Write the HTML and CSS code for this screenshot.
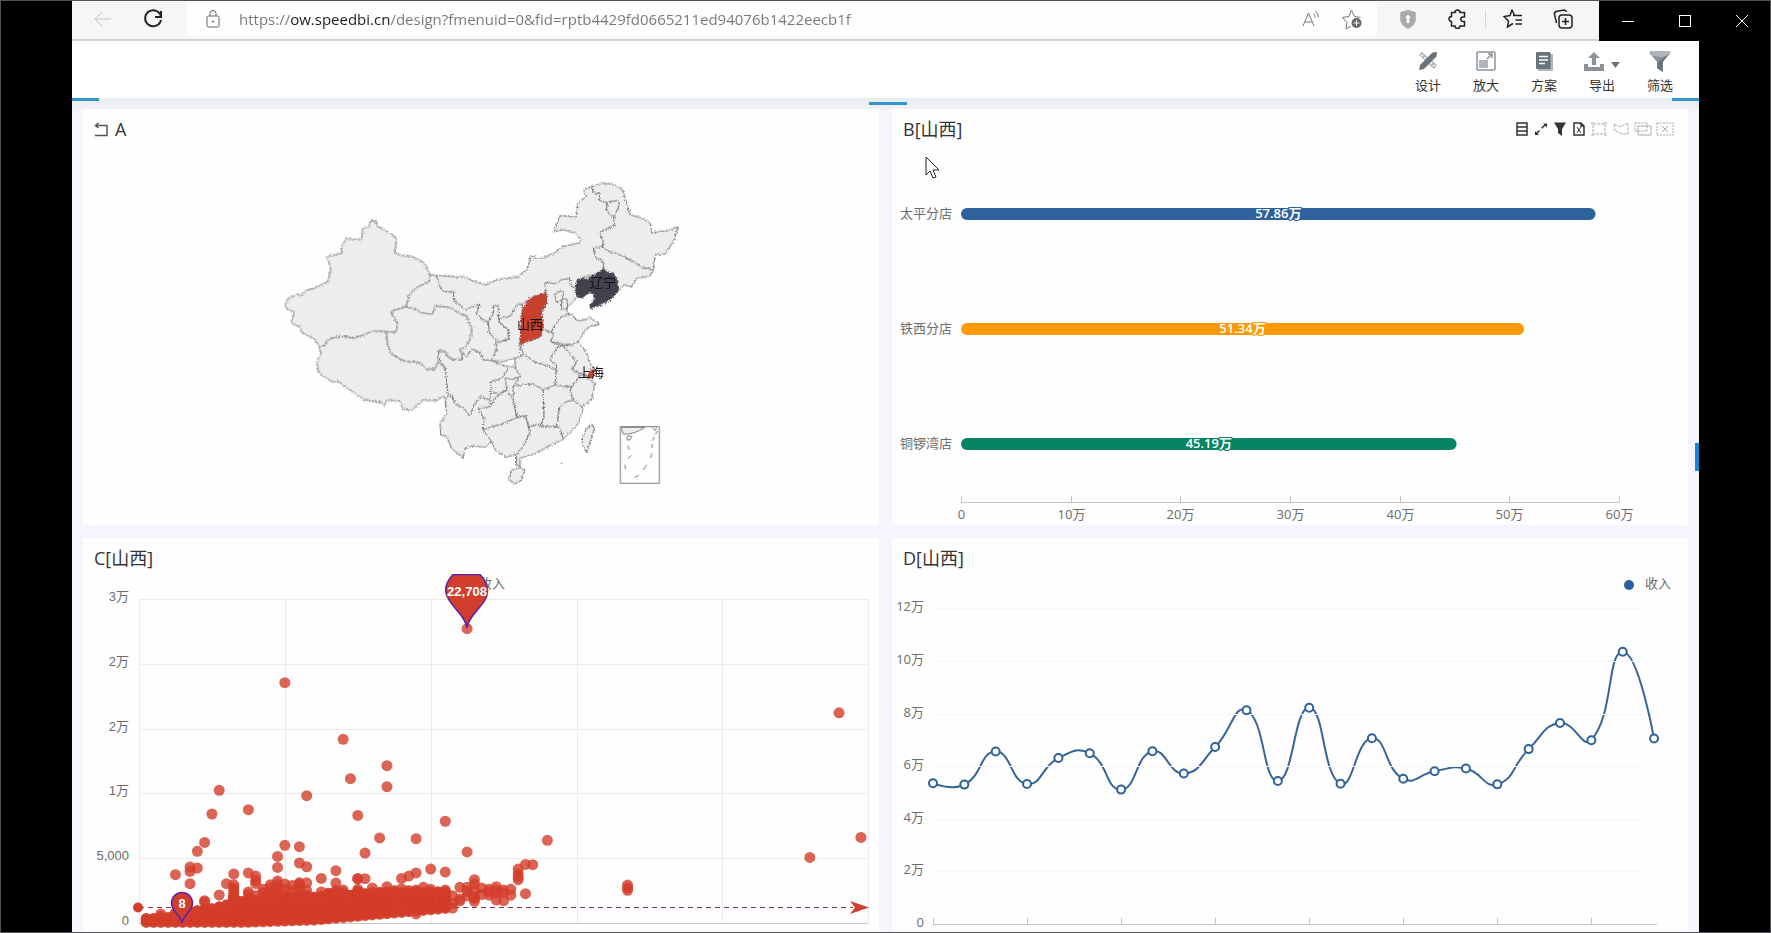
FILE: index.html
```html
<!DOCTYPE html>
<html lang="zh-CN">
<head>
<meta charset="utf-8">
<title>SpeedBI</title>
<link rel="stylesheet" href="styles.css">
</head>
<body>
<header class="titlebar">
  <nav class="browser-nav">
    <button class="chrome-btn faded" aria-label="后退"><svg width="20" height="20" viewBox="0 0 20 20"><path d="M18 10H2M9 3l-7 7 7 7"/></svg></button>
    <button class="chrome-btn" aria-label="刷新"><svg width="20" height="20" viewBox="0 0 20 20"><path class="bold" d="M18 7.500A8 8 0 1 0 18 11M18 2v6h-6"/></svg></button>
  </nav>
  <div class="address">
    <svg class="lock" width="16" height="20" viewBox="0 0 16 20"><rect x="2" y="7" width="12" height="11" rx="1.500"/><path d="M5 7V4.500a3 3 0 0 1 6 0V7"/><circle class="solid" cx="8" cy="12.500" r="1"/></svg>
    <input class="url" type="text" aria-label="地址" value="https://ow.speedbi.cn/design?fmenuid=0&amp;fid=rptb4429fd0665211ed94076b1422eecb1f">
    <button class="chrome-btn small grey" aria-label="朗读"><svg width="20" height="20" viewBox="0 0 20 20"><path d="M2 17L7.500 4 13 17M4 13h7M12.500 4.500a6 6 0 0 1 1.500 4M14.500 2a9 9 0 0 1 3 6.500"/></svg></button>
    <button class="chrome-btn small grey" aria-label="收藏"><svg width="22" height="22" viewBox="0 0 22 22"><path d="M10 18l-5 3 1-6.500L1.500 9.500 8 8.500 10.500 2l3 6.500 6 1"/><circle class="solid" cx="15.500" cy="15" r="5"/><path class="cut" d="M12.500 15h6M15.500 12v6"/></svg></button>
  </div>
  <div class="browser-tools">
    <button class="chrome-btn" aria-label="防护"><svg width="20" height="20" viewBox="0 0 20 20"><path class="shield" d="M10 1l7.500 2.500V10c0 5-4 8-7.500 9.500C6.500 18 2.500 15 2.500 10V3.500z"/><path class="keyhole" d="M8.500 14l.500-4a2 2 0 1 1 2 0l.500 4z"/></svg></button>
    <button class="chrome-btn" aria-label="扩展"><svg width="20" height="20" viewBox="0 0 20 20"><path class="bold" d="M7 3.500a2.500 2.500 0 0 1 5 0h4.500V8H15a2 2 0 0 0 0 4.500h1.500V17H12a2.500 2.500 0 0 1-5 0H3.500v-4.500a2.500 2.500 0 0 1 0-5V3.500z"/></svg></button>
    <span class="divider"></span>
    <button class="chrome-btn" aria-label="收藏夹"><svg width="20" height="20" viewBox="0 0 20 20"><path class="bold" d="M10 6.500h9M12.500 11H19M12.500 15H19M10 14.500L4.500 18l1-6L1 7.500l6-1L9 1l2.500 5.500"/></svg></button>
    <button class="chrome-btn" aria-label="集锦"><svg width="20" height="20" viewBox="0 0 20 20"><rect class="bold" x="6" y="6" width="13" height="13" rx="3"/><path class="bold" d="M12.500 9v7M9 12.500h7M3.500 14L1.500 5.500Q1 3.500 3 2.500L11 1q2 0 2.500 2"/></svg></button>
  </div>
  <div class="window-controls">
    <button aria-label="最小化"><svg width="14" height="14" viewBox="0 0 14 14"><path d="M1 7.500h12"/></svg></button>
    <button aria-label="最大化"><svg width="14" height="14" viewBox="0 0 14 14"><rect x="1.500" y="1.500" width="11" height="11"/></svg></button>
    <button aria-label="关闭"><svg width="14" height="14" viewBox="0 0 14 14"><path d="M1 1l12 12M13 1L1 13"/></svg></button>
  </div>
</header>

<main class="app">
  <div class="app-toolbar">
    <button class="tool"><svg width="20" height="20" viewBox="0 0 20 20"><path class="light" d="M1 4l3-3 15 13-3 4z"/><path class="cutline" d="M5 3.500L3.500 5M8 6L6.500 7.500M14 11.500l-1.500 1.500M16.500 14L15 15.500"/><path class="dark" d="M1 19l1-5L14.500 1.500 19 1l-.500 4.500L6 18z"/></svg><span>设计</span></button>
    <button class="tool"><svg width="20" height="20" viewBox="0 0 20 20"><rect class="outline" x="1" y="1" width="18" height="18" rx="1"/><rect class="light" x="3" y="9" width="9" height="8"/><path class="outline" d="M11 8l5-5M12 3h4v4"/></svg><span>放大</span></button>
    <button class="tool"><svg width="20" height="20" viewBox="0 0 20 20"><rect class="light" x="4" y="3" width="15" height="17" rx="1"/><rect class="dark" x="2" y="1" width="14.500" height="17" rx="1"/><path class="cutline" d="M5 5.500h9M5 9h9M5 12.500h6"/></svg><span>方案</span></button>
    <button class="tool"><span class="tool-icons"><svg width="20" height="20" viewBox="0 0 20 20"><path class="mid" d="M8 14V7H4l6-6 6 6h-4v7z"/><path class="mid" d="M0 13h4v3h12v-3h4v7H0z"/></svg><svg class="caret" width="9" height="6" viewBox="0 0 9 6"><path class="dark" d="M0 0h9L4.500 6z"/></svg></span><span>导出</span></button>
    <button class="tool"><svg width="24" height="24" viewBox="0 0 24 24"><path class="mid" d="M1 1h22v3l-8 9v11l-6-4v-7L1 4z"/><path class="light" d="M1 1h22v3l-9 4L3 6z"/><path class="dark" d="M20 6l-5 7v11l-6-4v-6z"/></svg><span>筛选</span></button>
  </div>

  <div class="board">
    <span class="handle handle-left"></span>
    <span class="handle handle-mid"></span>
    <span class="handle handle-right"></span>
    <span class="handle handle-side"></span>

    <section class="panel">
      <header class="panel-head">
        <button class="back" aria-label="返回"><svg width="15" height="15" viewBox="0 0 15 15"><path d="M1 3.500h12v10H1M4.500 1L1.500 3.500l3 2.500"/></svg></button>
        <h2>A</h2>
      </header>
      <svg class="chart" viewBox="0 0 796 380" role="img" aria-label="地图">
        <defs>
          <filter id="coast" x="-5%" y="-5%" width="110%" height="110%">
            <feTurbulence type="fractalNoise" baseFrequency="0.200" numOctaves="2" seed="4"/>
            <feDisplacementMap in="SourceGraphic" scale="12" xChannelSelector="R" yChannelSelector="G"/>
          </filter>
        </defs>
        <g class="map" transform="translate(337 25) scale(.3333)">
          <g filter="url(#coast)">
            <path class="land" d="M200 590L420 590 430 700 410 775 325 780 200 775Z"/>
            <g transform="translate(-450 0)">
              <path d="M300 153H318L322 168 345 182 368 192 380 210 374 248 392 256 425 259 462 278 481 314 478 335 440 352 418 375 408 410 362 425 383 460 378 487 350 485 310 482 285 493 250 505 215 498 175 508 163 527 148 528 130 505 95 488 88 470 65 460 72 425 52 418 45 405 55 385 85 371 90 378 110 360 130 356 173 335 183 295 170 260 215 250V232L228 203 245 208H275L278 175 297 170Z"/>
              <path d="M148 528L153 550 140 578 148 610 190 638 200 632 240 660 285 690 335 697 342 710 350 690 390 693 400 720H425L460 690 500 692 518 680 535 688 533 640 530 605 510 578 500 582 495 597 470 598 450 578 400 572 362 550 352 520 350 485 310 482 285 493 250 505 215 498 175 508 163 527Z"/>
              <path d="M362 425L408 410 445 420 450 428 487 432 495 408 540 412 560 425 590 440 607 480 597 515 585 535H570L578 550 572 575 545 568 525 545 510 538 503 545 505 575 495 597 470 598 450 578 400 572 362 550 352 520 350 485 378 487 383 460Z"/>
              <path d="M408 410L418 375 440 352 478 335 481 314 500 316 510 350 522 365H552L550 390 585 418 600 405 630 402 620 430 640 452 655 455 658 490 678 508V540L665 572 640 570 630 548 608 538 590 560 572 548 570 535H585L597 515 607 480 590 440 560 425 540 412 495 408 487 432 450 428 445 420Z"/>
            </g>
            <path d="M50 316L100 320 135 322 165 335 195 345 235 328 295 320 325 295 328 262 340 258 352 265 375 262 410 245 420 232 478 218 483 208 465 188 430 180 402 185 420 138 470 140 472 105 498 78 490 60 515 50 520 68 538 70 540 92 562 97 560 120 582 140 585 165 540 188 550 215 548 230 520 235 528 265 548 270 552 298 530 315 500 318 472 330 470 355 455 350 448 325 425 330 410 340 375 338 378 370 345 378 325 390 308 402 290 405 270 440 235 445V408L222 405 220 430 205 455 190 450 170 430 180 402 135 418 100 390 102 365H72L60 350Z"/>
            <path d="M515 50L545 40 580 42 608 60 632 135 660 142 690 158 695 188 750 180 775 170 760 215 735 252 705 255 700 298 665 292 640 275 615 262 590 250 565 245 548 230 550 215 540 188 585 165 582 140 600 100 590 92 562 97 540 92 538 70 520 68Z"/>
            <path d="M548 230L565 245 590 250 615 262 640 275 665 292 700 298 690 318 650 325 635 350 612 345 596 362 590 325 570 310 552 298 548 270 528 265 520 235ZM562 97L560 120 570 135 582 140 600 100 590 92Z"/>
            <path d="M375 338L410 340 425 330 448 325 455 350 470 355V378L462 392 440 412V428L455 432 425 440 405 465 395 485 370 480 362 480 365 430 380 398 378 370ZM403 372L420 362 432 368 425 390 410 398ZM425 390L440 385 444 415 425 418Z"/>
            <path d="M425 440L455 432 470 452 500 448 510 440 518 450 536 458V465L510 468 490 488 475 515 455 525 420 520 390 515 400 498 395 485 405 465Z"/>
            <path d="M308 402L303 470 300 525 303 560 285 565 250 575 215 572 230 540V518L265 510 268 480 240 460 235 445 270 440 290 405Z"/>
            <path d="M235 445V408L222 405 220 430 205 455 208 488 225 505 240 515 265 505V480L240 460Z"/>
            <path d="M300 525L325 513 362 500V480L370 480 395 487 400 498 390 515 418 525 405 545 390 570 410 585 408 600 390 590 340 575 310 550Z"/>
            <path d="M418 525L455 525 475 515 495 540 510 580 525 600 505 618 480 610 455 600 470 575 450 550 432 530Z"/>
            <path d="M418 525L432 530 450 550 470 575 455 600 480 610 475 625 455 650H430L405 645 408 600 410 585 390 570 405 545Z"/>
            <path d="M475 625L480 610 505 625 525 640 515 690 485 710 460 690 450 665 455 650Z"/>
            <path d="M285 565L303 560 310 550 340 575 390 590 408 600 405 645 370 660 340 642 280 648 300 620 285 590Z"/>
            <path d="M262 590H285L300 620 280 628 255 625 260 660 235 672 212 665V635L245 625Z"/>
            <path d="M55 545L60 575 75 590 85 680 95 675 105 700 130 715 150 738 160 710 180 680 210 690 212 665V635L245 625 262 600V590L215 572 190 570 180 548 155 538 140 560 125 545 128 570 90 568 70 545Z"/>
            <path d="M85 680L75 690 80 730 60 762 62 795 80 800 95 835 130 865 135 835 160 828 195 832 215 815 190 780 192 745 175 715 210 710V690L180 680 160 710 150 738 130 715 105 700 95 675Z"/>
            <path d="M175 715L210 710 225 685 260 660 280 690 290 740 285 745 240 765 215 770 190 780 192 745Z"/>
            <path d="M190 780L215 770 240 765 285 745 318 738 325 770 330 785 315 820 295 850 260 862 225 840 215 815Z"/>
            <path d="M280 648L340 642 370 660 372 740 365 760 350 765 325 770 318 738 290 740 280 690Z"/>
            <path d="M370 660L405 645 430 650 455 650 450 665 460 690 440 695 420 710 410 770 370 770 365 760 372 740Z"/>
            <path d="M460 690L485 710 490 720 475 760 430 808 420 775 410 770 420 710 440 695Z"/>
            <path d="M330 785L325 770 350 765 370 770H410L420 775 430 808 395 825 345 850 300 865V890L290 885V855L315 820Z"/>
            <path d="M275 900L300 893 315 900 300 935 280 942 265 925ZM518 762L523 775 500 848 487 822 488 800 500 775Z"/>
            <path class="dark-province" d="M472 330L485 325 500 328 552 298 565 310 580 308 590 330 596 362 570 390 540 405 512 416 510 405 525 385 522 370 505 368 485 385 470 378 468 355Z"/>
            <path class="red-province" d="M378 370L380 398 363 430 370 465 362 500 325 513 300 525 303 470 308 420 325 388 345 378Z"/>
            <path class="red-province" d="M510 600L525 600 518 624 503 622Z"/>
          </g>
          <rect class="inset" x="601" y="770" width="117" height="170"/>
          <path d="M603 772H675Q640 795 610 792Z"/>
          <path class="inset" d="M697 772L705 782 710 772M622 798H635L630 810H622ZM712 782L706 794M702 800L698 812M696 822V834M696 850L692 864M680 884L670 900M656 916L644 922M614 884L617 898M624 866L634 856M624 826L627 840"/>
          <circle cx="425" cy="880" r="1"/>
        </g>
        <g class="map-label">
          <text x="520" y="142">辽宁</text>
          <text x="447" y="184">山西</text>
          <text x="508" y="232">上海</text>
        </g>
      </svg>
    </section>

    <section class="panel">
      <header class="panel-head">
        <h2>B[山西]</h2>
        <div class="panel-tools">
          <button aria-label="数据"><svg width="14" height="16" viewBox="0 0 14 16"><path d="M2 2h10v12H2zM2 6h10M2 10h10"/></svg></button>
          <button aria-label="展开"><svg width="14" height="16" viewBox="0 0 14 16"><path d="M2 13L12 3" stroke-dasharray="5 3"/><path class="fill" d="M9 2.500h4v4zM1 10v4h4z"/></svg></button>
          <button aria-label="筛选"><svg width="14" height="16" viewBox="0 0 14 16"><path class="fill" d="M1 1.500h12L9 8v7l-4-3V8z"/></svg></button>
          <button aria-label="导出"><svg width="14" height="16" viewBox="0 0 14 16"><path d="M2 2h7l3 3v9H2zM9 2v3h3"/><path class="thin" d="M5 6l4 6M9 6l-4 6"/></svg></button>
          <button class="wide" aria-label="矩形选择"><svg width="18" height="16" viewBox="0 0 18 16"><path stroke-dasharray="3 1" d="M3 3h12v10H3z"/><path d="M1 2h3M14 2h3M1 14h3M14 14h3"/></svg></button>
          <button class="wide" aria-label="圈选"><svg width="18" height="16" viewBox="0 0 18 16"><path stroke-dasharray="3 1" d="M2 3l6 3 8-4v11H11L3 10z"/></svg></button>
          <button class="wide" aria-label="保持选择"><svg width="18" height="16" viewBox="0 0 18 16"><path d="M4 5h13v9H4z"/><path stroke-dasharray="2 1" d="M1 2h12v8H1z"/></svg></button>
          <button class="wide" aria-label="清除选择"><svg width="18" height="16" viewBox="0 0 18 16"><path stroke-dasharray="2 1" d="M1 2h16v12H1z"/><path d="M6 5l6 6M12 5l-6 6"/></svg></button>
        </div>
      </header>
      <svg class="chart" id="bar-chart" viewBox="0 0 796 380" role="img" aria-label="分店收入"></svg>
      <svg class="cursor" width="16" height="24" viewBox="0 0 16 24"><path d="M1 1v18l4-4 3 7 3-1-3-7h6z"/></svg>
    </section>

    <section class="panel">
      <header class="panel-head"><h2>C[山西]</h2></header>
      <svg class="chart helv" id="scatter-chart" viewBox="0 0 796 358" role="img" aria-label="收入散点图"></svg>
    </section>

    <section class="panel">
      <header class="panel-head"><h2>D[山西]</h2></header>
      <svg class="chart" id="line-chart" viewBox="0 0 796 358" role="img" aria-label="收入趋势"></svg>
    </section>
  </div>
</main>
<script src="charts.js"></script>
</body>
</html>
```

FILE: styles.css
```css
* { box-sizing: border-box; }

body {
  margin: 0;
  height: 100vh;
  display: flex;
  flex-direction: column;
  overflow: hidden;
  background: #000;
  border: 1px solid #555358;
  font-family: "Open Sans", "Noto Sans CJK SC", sans-serif;
  color: #333;
}

button {
  display: flex;
  align-items: center;
  justify-content: center;
  padding: 0;
  border: 0;
  background: none;
  color: inherit;
  font: inherit;
}

/* browser chrome */
.titlebar {
  display: flex;
  flex: none;
  height: 40px;
  margin-left: 71px;
}
.browser-nav,
.address,
.browser-tools {
  display: flex;
  align-items: center;
  padding-bottom: 3px;
  background: #f6f6f6;
  border-bottom: 2px solid #d2d2d2;
}
.browser-nav { width: 115px; padding-left: 6px; }
.address {
  flex: 1;
  min-width: 0;
  padding-left: 18px;
  padding-right: 5px;
  background: linear-gradient(#fefefe 35px, #f6f6f6 35px);
}
.browser-tools { width: 222px; padding-left: 6px; }
.chrome-btn { width: 50px; height: 32px; }
.chrome-btn.small { width: 41px; }
.titlebar svg {
  fill: none;
  stroke: currentColor;
  stroke-width: 1;
}
.titlebar .bold { stroke-width: 2; stroke: #222; }
.titlebar .browser-tools .bold { stroke-width: 1.500; }
.titlebar .solid { fill: #666; stroke: none; }
.titlebar .cut { stroke: #fff; stroke-width: 1; fill: none; }
.titlebar .shield { fill: #aaa; stroke: #bbb; }
.titlebar .keyhole { fill: #fff; stroke: none; }
.faded { color: #c4c4c4; }
.grey { color: #777; }
.lock { flex: none; color: #666; }
.url {
  flex: 1;
  min-width: 0;
  margin-left: 18px;
  padding: 0;
  border: 0;
  outline: 0;
  font: 15px "Open Sans", sans-serif;
  color: transparent;
  background: linear-gradient(90deg, #74777a 51px, #1c1c1c 51px, #1c1c1c 151px, #74777a 151px);
  background-clip: text;
  -webkit-background-clip: text;
}
.divider { width: 1px; height: 18px; margin: 0 2px; background: #d6d6d6; }
.window-controls { display: flex; width: 171px; }
.window-controls button { flex: 1; color: #fff; }

/* application toolbar */
.app {
  flex: 1;
  min-height: 0;
  display: flex;
  flex-direction: column;
  margin: 0 71px;
  background: #f4f5fd;
}
.app-toolbar {
  flex: none;
  display: flex;
  justify-content: flex-end;
  height: 57px;
  padding-right: 10px;
  background: #fff;
}
.tool {
  flex-direction: column;
  justify-content: flex-start;
  gap: 3px;
  width: 58px;
  padding-top: 9px;
  font-size: 13px;
  line-height: 20px;
}
.tool > svg,
.tool-icons { height: 22px; }
.tool-icons { display: flex; align-items: center; gap: 7px; }
.caret { margin-top: 8px; }
.light { fill: #b0b6bb; }
.mid { fill: #8b9298; }
.dark { fill: #69737b; }
.outline { fill: none; stroke: #8b9298; stroke-width: 1.500; }
.cutline { fill: none; stroke: #fff; stroke-width: 1.500; }

/* dashboard */
.board {
  position: relative;
  flex: 1;
  min-height: 0;
  display: grid;
  grid-template-columns: 1fr 1fr;
  grid-template-rows: 416fr 394fr;
  gap: 13px;
  padding: 11px 11px 0;
  background: linear-gradient(#e9edf0 0, #f0f2f6 11px, #f4f5fd 12px);
}
.panel {
  position: relative;
  display: flex;
  flex-direction: column;
  min-width: 0;
  min-height: 0;
  background: #fefefe;
}
.panel-head {
  flex: none;
  display: flex;
  align-items: center;
  height: 36px;
  padding: 4px 13px 0 11px;
}
.panel-head h2 {
  margin: 0;
  font-size: 18px;
  font-weight: 400;
  line-height: 32px;
}
.back { margin-right: 6px; }
.back svg { fill: none; stroke: #555; stroke-width: 1.500; }
.panel-tools { display: flex; gap: 2px; margin-left: auto; }
.panel-tools button { width: 17px; color: #333; }
.panel-tools .wide { width: 20px; color: #aaa; }
.panel-tools svg { fill: none; stroke: currentColor; stroke-width: 1.500; }
.panel-tools .wide svg,
.panel-tools .thin { stroke-width: 1; }
.panel-tools .fill { fill: currentColor; stroke: none; }
.chart { flex: 1; width: 100%; min-height: 0; font-size: 13px; }
.helv { font-family: "Liberation Sans", "Noto Sans CJK SC", sans-serif; }

.handle { position: absolute; z-index: 1; background: #3396d0; }
.handle-left { left: 0; top: 0; width: 27px; height: 3px; }
.handle-right { right: 0; top: 0; width: 27px; height: 3px; }
.handle-mid { left: 49%; top: 4px; width: 38px; height: 3px; }
.handle-side { right: 0; top: 345px; width: 4px; height: 28px; background: #1687d6; }
.cursor { position: absolute; left: 33px; top: 47px; fill: #fff; stroke: #222; }

/* map */
.map { fill: #ededed; stroke: #7c7c7c; stroke-width: 3; stroke-linejoin: round; }
.map .land { stroke: none; }
.map .dark-province { fill: #42424f; stroke: #42424f; }
.map .red-province { fill: #c8402f; stroke: #a8443a; }
.map .inset { fill: none; }
.map-label { fill: #111; text-anchor: middle; }

/* charts */
.tick-text { fill: #6c6c6c; }
.end { text-anchor: end; }
.middle { text-anchor: middle; }
.axis { fill: none; stroke: #c4c4c4; }
.grid-line { fill: none; stroke: #ececec; }
.grid-line.pale { stroke: #f6f7f7; }
.value {
  fill: #fff;
  font-weight: 600;
  text-anchor: middle;
  paint-order: stroke;
  stroke-width: 2;
}
.dot { fill: #d33d2b; fill-opacity: .8; }
.mark { fill: #d33d2b; }
.mark-line { stroke: #8c3240; stroke-width: 1; stroke-dasharray: 5 4; }
.pin { fill: #d33d2b; stroke: #5a22b4; stroke-width: 1.500; }
.series { fill: none; stroke: #376596; stroke-width: 2; }
.node { fill: #fff; stroke: #2f6299; stroke-width: 2; }
.legend-dot { fill: #2c5f9c; }
```

FILE: charts.js
```js
const NS = "http://www.w3.org/2000/svg";
function add(parent, tag, attrs, text) {
  const node = document.createElementNS(NS, tag);
  for (const key in attrs) node.setAttribute(key, attrs[key]);
  if (text !== undefined) node.textContent = text;
  parent.appendChild(node);
}

function drawBars(svg) {
  const left = 69, axisY = 357, unit = 10.967;
  const rows = [
    ["太平分店", 57.86, "#2e629d", 69],
    ["铁西分店", 51.34, "#fe9900", 184],
    ["铜锣湾店", 45.19, "#058563", 299]
  ];
  for (const [name, value, color, y] of rows) {
    const width = value * unit;
    add(svg, "text", { class: "tick-text end", x: 60, y: y + 4 }, name);
    add(svg, "rect", { x: left, y: y - 6, width, height: 12, rx: 6, fill: color });
    add(svg, "text", { class: "value", x: left + width / 2, y: y + 4, stroke: color }, value + "万");
  }
  let d = `M${left} ${axisY + .5}H${left + 60 * unit}`;
  for (let n = 0; n <= 60; n += 10) {
    const x = Math.round(left + n * unit) + .5;
    d += `M${x} ${axisY}v-6`;
    add(svg, "text", { class: "tick-text middle", x, y: axisY + 17 }, n ? n + "万" : "0");
  }
  add(svg, "path", { class: "axis", d });
}

function drawScatter(svg) {
  const x0 = 56, y0 = 349;
  const px = k => x0 + k * 7.292;
  const py = v => y0 - v * 0.01296;
  let grid = "";
  for (let k = 0; k <= 100; k += 20) grid += `M${Math.round(px(k)) + .5} 25V${y0}`;
  ["0", "5,000", "1万", "2万", "2万", "3万"].forEach((label, i) => {
    const y = Math.round(py(i * 5000));
    if (i) grid += `M${x0} ${y + .5}H785`;
    add(svg, "text", { class: "tick-text end", x: 46, y: y + 2 }, label);
  });
  add(svg, "path", { class: "grid-line", d: grid });
  add(svg, "path", { class: "axis", d: `M${x0} ${y0 + .5}H785` });
  add(svg, "path", { class: "mark-line", d: "M56 333.500H770" });

  // each entry: x value followed by the incomes recorded for it
  const outliers = [
    [3, 700], [5, 3730], [7, 4320, 3980, 3030], [8, 5530, 4240], [9, 6220, 1720, 1600],
    [10, 8410], [11, 10240, 2160], [12, 3030], [13, 3780, 2950, 2700, 2500, 2300, 2100, 1900],
    [15, 8740, 3860, 2400, 2200], [16, 3620, 3290, 3050, 2100], [17, 2600, 2350], [18, 2950, 2700, 2400],
    [19, 5140, 4290, 3250, 3000, 2750, 2500], [20, 18540, 5990, 3000, 2600], [21, 2900, 2500],
    [22, 5890, 4630, 3100, 3000, 2800, 2600], [23, 9820, 4340, 3100, 2500], [25, 3440, 2400],
    [27, 4040, 3080, 2500], [28, 14170, 2550], [29, 11140], [30, 8300, 3440, 3400, 2600],
    [31, 5400, 3420], [32, 2700], [33, 6560], [34, 12140, 10520, 2800], [35, 2500, 900],
    [36, 3440, 2650, 850], [37, 3620, 2500], [38, 6510, 3860, 2550, 700], [39, 2750], [40, 4160, 2600],
    [42, 7850, 3930, 2550], [43, 2100, 1500, 1150], [44, 2750, 1850, 1700],
    [45, 22708, 5480, 2750, 2450, 2100], [46, 3340, 3000, 2500, 2050, 1900, 1670], [47, 2700, 2200],
    [48, 2600, 2400, 2150], [49, 2800, 2550, 2300, 1770], [50, 2550, 2350, 1720], [51, 2600, 2150],
    [52, 4160, 3800, 3550, 3340], [53, 4520, 2260], [54, 4500], [56, 6380],
    [67, 2930, 2700, 2520], [92, 5060], [96, 16220], [99, 6600]
  ];
  const dot = (k, v) => add(svg, "circle", { class: "dot", cx: px(k), cy: py(v), r: 5.5 });
  // upper edge of the crowded band
  const top = [, 350, 350, 500, 450, 750, 850, 900, 950, 1050, 1100, 1250, 1400, 2000, 1650, 1850,
    1750, 1950, 2000, 2150, 2150, 2050, 2100, 2100, 2000, 2050, 2300, 2350, 2350, 2150, 2450,
    2250, 2350, 2350, 2400, 2400, 2350, 2400, 2400, 2350, 2400, 2400, 2400];
  for (let k = 1; k <= 42; k++) {
    const low = k < 14 ? 40 : k < 24 ? 40 + (k - 14) * 18 : 220 + (k - 24) * 50;
    for (let v = low; v <= top[k]; v += 70) dot(k, v);
    dot(k, top[k]);
  }
  for (const [k, ...values] of outliers) values.forEach(v => dot(k, v));

  add(svg, "text", { class: "tick-text", x: 396, y: 14 }, "收入");
  add(svg, "circle", { class: "mark", cx: 55, cy: 333.5, r: 5 });
  add(svg, "path", { class: "mark", d: "M786 333.500L767 327l5 6.500-5 6.500z" });
  add(svg, "path", { class: "pin", d: "M370 .5H397C404 8 407 17 402 26 397 35 385 43 384 54 383 43 371 35 366 26 360 17 363 8 370 .5Z" });
  add(svg, "text", { class: "value", x: 384, y: 22, stroke: "#d33d2b" }, "22,708");
  add(svg, "path", { class: "pin", d: "M99 349C98 341 88 337 88.500 329A10.500 10.500 0 0 1 109.500 329C110 337 100 341 99 349Z" });
  add(svg, "text", { class: "value", x: 99, y: 334, stroke: "#d33d2b" }, "8");
}

function drawLine(svg) {
  const x0 = 41, y0 = 350, step = 31.35, unit = 26.3;
  const values = [5.35, 5.3, 6.56, 5.32, 6.31, 6.49, 5.11, 6.57, 5.72, 6.73, 8.13, 5.44, 8.22,
    5.33, 7.06, 5.52, 5.81, 5.91, 5.31, 6.65, 7.64, 6.99, 10.35, 7.05];
  const pts = values.map((v, i) => [x0 + i * step, y0 - v * unit]);
  const dist = (a, b) => Math.hypot(a[0] - b[0], a[1] - b[1]);
  // smooth curve: tangents follow the neighbouring points, weighted by segment length
  const ctrl = pts.map((p, i) => {
    const a = pts[i - 1], b = pts[i + 1];
    if (!a || !b) return [p, p];
    const da = dist(a, p), db = dist(p, b), sum = da + db;
    const vx = (b[0] - a[0]) / 2, vy = (b[1] - a[1]) / 2;
    return [[p[0] - vx * da / sum, p[1] - vy * da / sum], [p[0] + vx * db / sum, p[1] + vy * db / sum]];
  });
  let d = "M" + pts[0];
  for (let i = 1; i < pts.length; i++) d += `C${ctrl[i - 1][1]} ${ctrl[i][0]} ${pts[i]}`;
  add(svg, "path", { class: "series", d });

  let grid = "";
  for (let n = 0; n <= 12; n += 2) {
    const y = Math.round(y0 - n * unit);
    if (n) grid += `M${x0} ${y + .5}H750`;
    add(svg, "text", { class: "tick-text end", x: 32, y: y + 3 }, n ? n + "万" : "0");
  }
  add(svg, "path", { class: "grid-line pale", d: grid });
  let axis = `M${x0} ${y0 + .5}H765`;
  for (let i = 0; i < 24; i += 3) axis += `M${Math.round(pts[i][0]) + .5} ${y0}v-6`;
  add(svg, "path", { class: "axis", d: axis });
  for (const [cx, cy] of pts) add(svg, "circle", { class: "node", cx, cy, r: 4 });
  add(svg, "circle", { class: "legend-dot", cx: 737, cy: 11, r: 5 });
  add(svg, "text", { class: "tick-text", x: 753, y: 14 }, "收入");
}

drawBars(document.getElementById("bar-chart"));
drawScatter(document.getElementById("scatter-chart"));
drawLine(document.getElementById("line-chart"));
```
